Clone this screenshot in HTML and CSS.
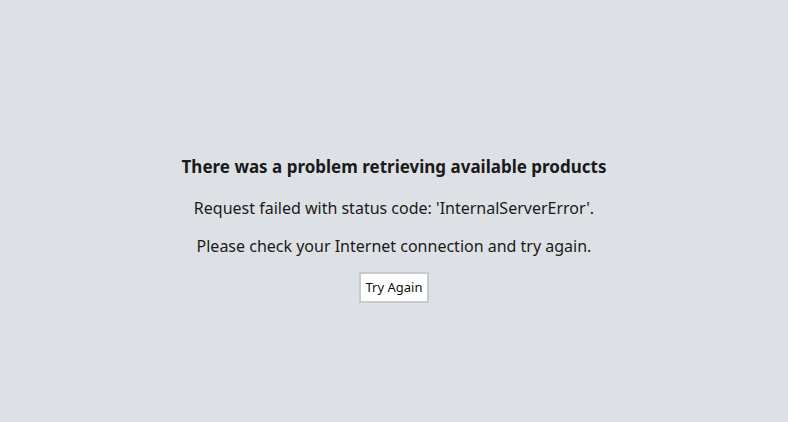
FILE: index.html
```html
<!DOCTYPE html>
<html>
<head>
<meta charset="utf-8">
<link rel="stylesheet" href="styles.css">
</head>
<body>
<div class="page">
  <div class="error">
    <h1 class="title">There was a problem retrieving available products</h1>
    <p class="msg">Request failed with status code: 'InternalServerError'.</p>
    <p class="msg">Please check your Internet connection and try again.</p>
    <button class="retry">Try Again</button>
  </div>
</div>
</body>
</html>
```
FILE: styles.css
```css
html, body {
  margin: 0;
  padding: 0;
  height: 100%;
}
body {
  background: #dde1e5;
  font-family: "Noto Sans", "Open Sans", sans-serif;
  color: #1a1a1a;
}
.page {
  height: 422px;
  display: flex;
  align-items: center;
  justify-content: center;
}
.error {
  display: flex;
  flex-direction: column;
  align-items: center;
  margin-top: 36px;
}
.title {
  margin: 0 0 17px;
  font-size: 17px;
  font-weight: 700;
  line-height: 24px;
}
.msg {
  margin: 0 0 14px;
  font-size: 16px;
  line-height: 24px;
}
.retry {
  margin-top: 0;
  font-family: inherit;
  font-size: 13px;
  color: #111;
  background: #fff;
  border: 2px solid #c7cbcf;
  border-radius: 0;
  padding: 4px 5px;
  line-height: 19px;
}
```
